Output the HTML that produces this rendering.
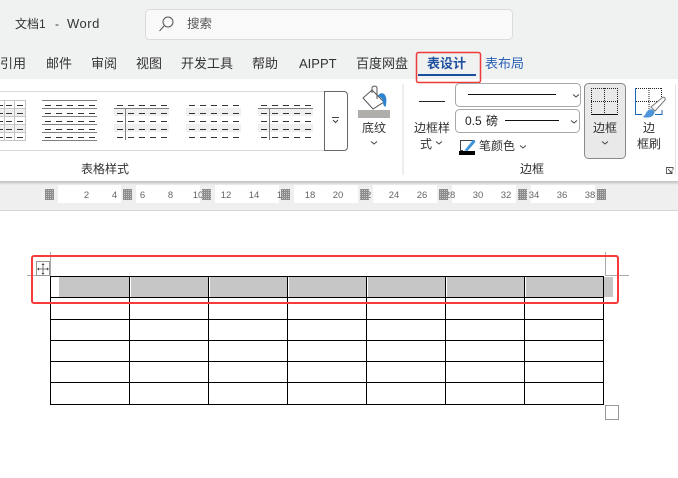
<!DOCTYPE html>
<html><head><meta charset="utf-8"><style>
html,body{margin:0;padding:0;background:#fff;}
body{width:678px;height:478px;overflow:hidden;position:relative;}
svg{position:absolute;left:0;top:0;display:block;}
text{font-family:"Liberation Sans","Noto Sans CJK SC",sans-serif;}
</style></head><body>
<svg width="678" height="478" viewBox="0 0 678 478" xmlns="http://www.w3.org/2000/svg">
<defs>
<pattern id="gm" width="2" height="2" patternUnits="userSpaceOnUse"><rect width="2" height="2" fill="#8c8c8c"/><rect width="1" height="1" fill="#c4c4c4"/></pattern>
<linearGradient id="sh" x1="0" y1="0" x2="0" y2="1"><stop offset="0" stop-color="#bdbdbd"/><stop offset="1" stop-color="#efefef"/></linearGradient>
<g id="d5"><path d="M3 4h6M14 4h6M25 4h6M36 4h6M47 4h6M3 12h6M14 12h6M25 12h6M36 12h6M47 12h6M3 20h6M14 20h6M25 20h6M36 20h6M47 20h6M3 28h6M14 28h6M25 28h6M36 28h6M47 28h6M3 36h6M14 36h6M25 36h6M36 36h6M47 36h6" stroke="#333" stroke-width="1" fill="none"/></g>
</defs>
<rect width="678" height="79" fill="#f0f1f1"/>
<rect y="79" width="678" height="102" fill="#fff"/>
<rect y="181" width="678" height="4" fill="url(#sh)"/>
<rect y="185" width="678" height="25" fill="#efefef"/>
<rect y="210" width="678" height="1" fill="#d4d4d4"/>

<text x="15" y="28" font-size="12" fill="#333">文档1</text>
<text x="55" y="28" font-size="12" fill="#333">-</text>
<text x="67" y="28" font-size="13" letter-spacing="0.500" fill="#333">Word</text>
<rect x="145.500" y="9.500" width="367" height="30" rx="4" fill="#f9f9f9" stroke="#dcdcdc"/>
<circle cx="168" cy="22" r="5" fill="none" stroke="#555" stroke-width="1"/>
<path d="M164 26L159.500 31" stroke="#555" fill="none"/>
<text x="187" y="28" font-size="12.500" fill="#555">搜索</text>

<g font-size="13" fill="#333">
<text x="0" y="68">引用</text>
<text x="46" y="68">邮件</text>
<text x="91" y="68">审阅</text>
<text x="136" y="68">视图</text>
<text x="181" y="68">开发工具</text>
<text x="252" y="68">帮助</text>
<text x="299" y="68">AIPPT</text>
<text x="356" y="68">百度网盘</text>
<text x="427" y="68" fill="#1f4f9f" font-weight="bold">表设计</text>
<text x="485" y="68" fill="#2b62b5">表布局</text>
</g>
<rect x="418" y="74" width="58" height="2" fill="#1a4fa0"/>
<rect x="416.500" y="52.500" width="64" height="30" rx="2" fill="none" stroke="#f03a3a" stroke-width="1.500"/>

<path d="M0 91.500H324M0 150.500H324" stroke="#d9d9d9"/>
<!-- item 1 -->
<rect x="0" y="108" width="25" height="8" fill="#f0f0f0"/><rect x="0" y="124" width="25" height="8" fill="#f0f0f0"/>
<path d="M0 100.500H25.500V140.500H0M0 108.500H25M0 116.500H25M0 124.500H25M0 132.500H25M4.500 100V140M14.500 100V140" stroke="#c4c4c4" fill="none"/>
<path d="M0 105.500H3M6 105.500H12M17 105.500H23M0 113.500H3M6 113.500H12M17 113.500H23M0 121.500H3M6 121.500H12M17 121.500H23M0 129.500H3M6 129.500H12M17 129.500H23M0 137.500H3M6 137.500H12M17 137.500H23" stroke="#333"/>
<!-- item 2 -->
<path d="M42 100.500H97M42 108.500H97M42 116.500H97M42 124.500H97M42 132.500H97M42 140.500H97" stroke="#808080"/>
<use href="#d5" x="42" y="101.500"/>
<!-- item 3 -->
<rect x="114" y="108" width="55" height="8" fill="#f0f0f0"/><rect x="114" y="124" width="55" height="8" fill="#f0f0f0"/>
<use href="#d5" x="114" y="101.500"/>
<path d="M114 108.500H169M125.500 108V140" stroke="#808080"/>
<!-- item 4 -->
<rect x="186" y="108" width="55" height="8" fill="#f0f0f0"/><rect x="186" y="124" width="55" height="8" fill="#f0f0f0"/>
<use href="#d5" x="186" y="101.500"/>
<!-- item 5 -->
<rect x="258" y="108" width="55" height="8" fill="#f0f0f0"/><rect x="258" y="124" width="55" height="8" fill="#f0f0f0"/>
<use href="#d5" x="258" y="101.500"/>
<path d="M258 108.500H313M269.500 108V140" stroke="#808080"/>
<path d="M324.500 91.500H344a3.500 3.500 0 0 1 3.500 3.500V147a3.500 3.500 0 0 1-3.500 3.500H324.500Z" fill="#fff" stroke="#666"/>
<path d="M332 117.500H339M333 120L335.500 122.500L338 120" stroke="#444" fill="none"/>
<text x="105" y="173" font-size="12" fill="#333" text-anchor="middle">表格样式</text>

<!-- paint bucket -->
<path d="M372 90L384 102L373 109L363 98Z" fill="#fff" stroke="#555" stroke-width="1"/>
<path d="M372 93V88c0-2.500 5-2.500 5 0V99" stroke="#555" fill="none" stroke-width="1"/>
<path d="M378 96c1-3 5-4 7-1c2 3 1.500 8 .5 12c-2-1-2.500-3-2.500-5c0-3-2-5-5-6Z" fill="#2d83d0"/>
<rect x="358" y="110" width="32" height="8" fill="#b0aeab"/>
<text x="374" y="132" font-size="12" fill="#333" text-anchor="middle">底纹</text>
<path d="M371 141.500l3 2.500l3-2.500" stroke="#444" fill="none"/>
<rect x="402.500" y="84" width="1" height="91" fill="#dedede"/>

<rect x="419" y="101" width="26" height="1" fill="#222"/>
<text x="432" y="132" font-size="12" fill="#333" text-anchor="middle">边框样</text>
<text x="420" y="148" font-size="12" fill="#333">式</text>
<path d="M436 141.500l3 2.500l3-2.500" stroke="#444" fill="none"/>

<rect x="455.500" y="83.500" width="125" height="23" rx="4" fill="#fff" stroke="#a8a8a8"/>
<rect x="468" y="94" width="88" height="1" fill="#111"/>
<path d="M573 94.500l3 2.500l3-2.500" stroke="#444" fill="none"/>
<rect x="455.500" y="109.500" width="124" height="23" rx="4" fill="#fff" stroke="#a8a8a8"/>
<text x="465" y="125" font-size="12" fill="#222">0.5</text>
<text x="486" y="125" font-size="12" fill="#222">磅</text>
<rect x="505" y="120" width="54" height="1" fill="#111"/>
<path d="M571 120.500l3 2.500l3-2.500" stroke="#444" fill="none"/>

<path d="M473 140.500H460.500V150.500H463" stroke="#444" fill="none"/>
<path d="M464.500 150.500L472.500 140.500C474 139 476 140.500 475 142.500L467.500 151Z" fill="#3f94dc"/>
<rect x="459" y="151" width="16" height="4" fill="#000"/>
<text x="479" y="150" font-size="12" fill="#333">笔颜色</text>
<path d="M520 145.500l3 2.500l3-2.500" stroke="#444" fill="none"/>

<rect x="584.500" y="83.500" width="41" height="75" rx="4" fill="#e9e9e9" stroke="#8a8a8a"/>
<path d="M591 88.500H618M591 101.500H618M604.500 88V114M591.500 88V114M617.500 88V114" stroke="#222" stroke-dasharray="1 1" fill="none"/>
<rect x="591" y="114" width="27" height="1" fill="#111"/>
<text x="605" y="132" font-size="12" fill="#333" text-anchor="middle">边框</text>
<path d="M602 141.500l3 2.500l3-2.500" stroke="#444" fill="none"/>

<path d="M636 88.500H662M636 101.500H662M649 88V112M661.500 88V98" stroke="#222" stroke-dasharray="1 1" fill="none"/>
<path d="M635.500 88V114.500H642M655 114.500H662V110" stroke="#1a66b8" fill="none"/>
<path d="M651 107L662.500 97.500C664.500 96.500 665.800 98.500 665 100L655 111Z" fill="#fff" stroke="#777" stroke-width="1"/>
<path d="M642.500 117c3-1 3.500-6 7-7.500c2-1 5.500 1 5 3.500c-1 3-4 4.500-6.500 4.500c-2 0-4 0-5.500-.5Z" fill="#4e95d9"/>
<text x="649" y="132" font-size="12" fill="#333" text-anchor="middle">边</text>
<text x="649" y="148" font-size="12" fill="#333" text-anchor="middle">框刷</text>

<text x="532" y="173" font-size="12" fill="#333" text-anchor="middle">边框</text>
<path d="M672.500 173.500H666.500V167.500H673V170M668 169L672 173M672 170.500V173H669.500" stroke="#555" fill="none" stroke-width="0.900"/>
<rect x="675" y="84" width="1" height="91" fill="#e4e4e4"/>

<!-- ruler -->
<g fill="#fff">
<rect x="58" y="185" width="63" height="18"/><rect x="136" y="185" width="64" height="18"/><rect x="215" y="185" width="64" height="18"/><rect x="294" y="185" width="64" height="18"/><rect x="373" y="185" width="64" height="18"/><rect x="452" y="185" width="64" height="18"/><rect x="531" y="185" width="64" height="18"/>
</g>
<g font-size="9.500" fill="#666" text-anchor="middle">
<text x="86.500" y="198">2</text><text x="114.500" y="198">4</text><text x="142.500" y="198">6</text><text x="170.500" y="198">8</text><text x="198" y="198">10</text><text x="226" y="198">12</text><text x="254" y="198">14</text><text x="282" y="198">16</text><text x="310" y="198">18</text><text x="338" y="198">20</text><text x="366" y="198">22</text><text x="394" y="198">24</text><text x="422" y="198">26</text><text x="450" y="198">28</text><text x="478" y="198">30</text><text x="506" y="198">32</text><text x="534" y="198">34</text><text x="562" y="198">36</text><text x="590" y="198">38</text>
</g>
<g fill="url(#gm)">
<rect x="45" y="189" width="9" height="11"/><rect x="123" y="189" width="9" height="11"/><rect x="202" y="189" width="9" height="11"/><rect x="281" y="189" width="9" height="11"/><rect x="360" y="189" width="9" height="11"/><rect x="439" y="189" width="9" height="11"/><rect x="518" y="189" width="9" height="11"/><rect x="597" y="189" width="9" height="11"/>
</g>

<!-- table -->
<g fill="#c6c6c6">
<rect x="59" y="277" width="70" height="20"/><rect x="131" y="277" width="77" height="20"/><rect x="210" y="277" width="77" height="20"/><rect x="289" y="277" width="77" height="20"/><rect x="368" y="277" width="77" height="20"/><rect x="447" y="277" width="77" height="20"/><rect x="526" y="277" width="77" height="20"/><rect x="604" y="277" width="9" height="20"/>
</g>
<path d="M50 276.500H604M50 297.500H604M50 319.500H604M50 340.500H604M50 361.500H604M50 382.500H604M50 404.500H604M50.500 276V405M129.500 276V405M208.500 276V405M287.500 276V405M366.500 276V405M445.500 276V405M524.500 276V405M603.500 276V405" stroke="#000" fill="none"/>

<path d="M50.500 252V276M27 275.500H50M605.500 252V275.500H629" stroke="#aaa" fill="none"/>
<rect x="36.500" y="261.500" width="13" height="14" fill="#fff" stroke="#999"/>
<path d="M43 264V274M38 269H48" stroke="#555" fill="none" stroke-width="0.800"/>
<path d="M43 263l-1.500 2h3ZM43 275l-1.500-2h3ZM37 269l2-1.500v3ZM49 269l-2-1.500v3Z" fill="#444"/>
<rect x="605.500" y="405.500" width="13" height="14" fill="#fff" stroke="#999"/>

<rect x="32" y="256" width="586" height="47" rx="2" fill="none" stroke="#f93a3a" stroke-width="2"/>
</svg>
</body></html>
